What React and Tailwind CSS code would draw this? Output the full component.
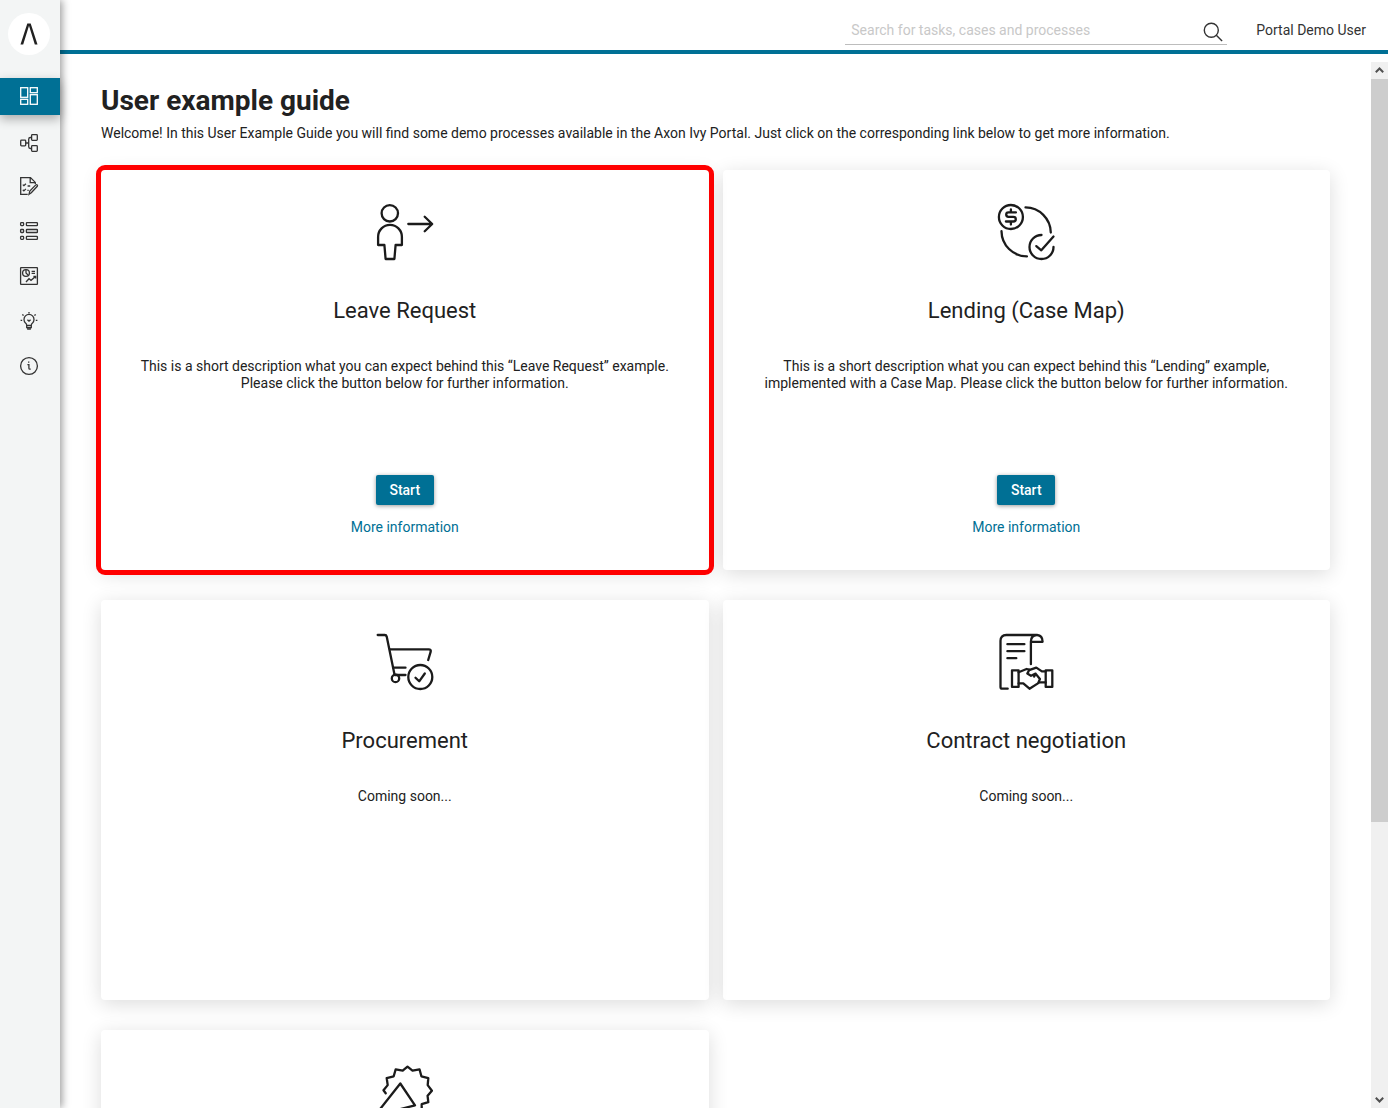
import React, { useState } from "react";

const DashboardIcon = () => (
  <>
    <rect x="3.7" y="3.7" width="7" height="9.6" />
    <rect x="3.7" y="15.3" width="7" height="5" />
    <rect x="13.3" y="3.7" width="7" height="5" />
    <rect x="13.3" y="10.7" width="7" height="9.6" />
  </>
);

const ProcessIcon = () => (
  <>
    <rect x="3.7" y="11.2" width="5" height="5.6" rx="0.8" />
    <rect x="14.6" y="5.7" width="5.7" height="5.6" rx="0.8" />
    <rect x="14.6" y="16.7" width="5.7" height="5.6" rx="0.8" />
    <path d="M8.7 14h3M14.6 8.5h-1.2q-1.7 0-1.7 1.7v7.6q0 1.7 1.7 1.7h1.2" />
  </>
);

const TaskIcon = () => (
  <>
    <path d="M18.3 10V8.4L13.5 3.6H3.7v16.7h7M13.2 3.6v5h5" />
    <path d="M5.8 10.6l1.1 1.1 2-2M5.8 15.8l1.1 1.1 2-2M10.6 12h2.6M10.4 16.4h1.3" />
    <path d="M12 20.3l.8-3.3 6-6.1q.8-.6 1.4 0t.1 1.4l-6 6.5z" />
  </>
);

const CaseIcon = () => (
  <>
    <rect x="3.6" y="3.6" width="3" height="3" rx="0.8" />
    <rect x="9.4" y="3.6" width="11" height="3" rx="0.6" />
    <rect x="3.6" y="10.5" width="3" height="3" rx="0.8" />
    <rect x="9.4" y="10.5" width="11" height="3" rx="0.6" />
    <rect x="3.6" y="17.4" width="3" height="3" rx="0.8" />
    <rect x="9.4" y="17.4" width="11" height="3" rx="0.6" />
  </>
);

const StatisticsIcon = () => (
  <>
    <rect x="3.6" y="3.6" width="16.8" height="16.8" rx="0.5" />
    <circle cx="9" cy="9" r="3.4" />
    <path d="M9 5.6V9l2.4 2.4M14.6 7.4h3.4M14.6 9.4h3.4" />
    <path d="M9 18l3-3.3 2 1.6 4.6-3.8M16.4 12.5h2.3v2" />
  </>
);

const ExamplesIcon = () => (
  <>
    <path d="M9.7 16.3q0-1.3-1.2-2.3a5 5 0 1 1 7 0q-1.2 1-1.2 2.3z" />
    <path d="M9.7 16.5v2h4.6v-2M10.8 18.6v1.6h2.4v-1.6M10.4 10.8l1.6 1.3 1.6-1.3" />
    <path d="M12 3v1.5M5.3 5.4l1.3 1.2M18.7 5.4l-1.3 1.2M3.6 11.4h1.6M18.8 11.4h1.6" />
  </>
);

const InfoIcon = () => (
  <>
    <circle cx="12" cy="12" r="8.4" />
    <path d="M10.4 10.6h1.5v3.6q0 1 1 1h.8" />
    <path d="M11.7 7.6v1.2" />
  </>
);

const menuItems = [
  { label: "Dashboard", icon: DashboardIcon },
  { label: "Processes", icon: ProcessIcon },
  { label: "Tasks", icon: TaskIcon },
  { label: "Cases", icon: CaseIcon },
  { label: "Statistics", icon: StatisticsIcon },
  { label: "User example guide", icon: ExamplesIcon },
  { label: "About", icon: InfoIcon },
];

const LeaveRequestIcon = () => (
  <>
    <circle cx="14.8" cy="11.3" r="8.2" />
    <path d="M9.4 43H3.1v-8.2a11.8 11.8 0 0 1 23.8 0V43h-6.3l-1.2 14h-8.8z" />
    <path d="M33.3 22H57M49.7 14.7l7.5 7.3-7.5 7.3" />
  </>
);

const LendingIcon = () => (
  <g transform="translate(0.7 0)">
    <circle cx="14.2" cy="15" r="12" />
    <path d="M19.2 10.4h-7.4q-2.3 0-2.3 2.2t2.3 2.3h4.8q2.5 0 2.5 2.3t-2.5 2.3H9.2M14.2 7.4v3M14.2 19.5v3" />
    <path d="M28.8 5.4a25.5 25.5 0 0 1 25.3 25.2M4.8 29.2a25.5 25.5 0 0 0 25.4 25.2" />
    <path d="M44.8 33a12 12 0 1 0 12 12" />
    <path d="M39.6 44.1l5 4.2 12.2-13.8" />
  </g>
);

const ProcurementIcon = () => (
  <>
    <path d="M2.7 3h7q1.6 0 2 1.6l7.8 37.8" />
    <path d="M15 17.3h38.7q2.6 0 2 2.4L53.2 28M18.7 35.7h11.8M19.8 43h10.7" />
    <circle cx="20.5" cy="46.4" r="3.7" />
    <circle cx="45.3" cy="45" r="12" />
    <path d="M40.5 45.7l3.7 3.6 5.6-7.8" />
  </>
);

const ContractIcon = () => (
  <g transform="translate(0.7 0)">
    <path d="M11 56.7H5.6q-1.8 0-1.8-1.8V8.8Q3.8 3 9.6 3h30.8q5.4.4 5.5 6.8H34.4M40 3q-5.8.6-5.8 6.6v22.6" />
    <path d="M10.7 12.2h17M10.7 19.2h17M10.7 26.2h8.9" />
    <rect x="15.3" y="38.3" width="6.6" height="16.6" />
    <rect x="49" y="38.3" width="6.6" height="16.6" />
    <path d="M21.9 40.3l8-3.3 2.8.6M21.9 51.4h4.7l6.2 5.3 10-6.3H49" />
    <path d="M49 39.4h-3.8l-5.6-3.8-7.2 2.6-1.8 3.4 3.7 2.2 4.6-2.2 4.3 5.4-1.4 3.4M38.9 41.6l-1.4 3" />
  </g>
);

const CertificateIcon = () => (
  <path d="M10.7 31.3l-2.2-3 4.2-5.2-1-7 7-1.8 2-7 7 1.4 4.8-4 5 4 7-1.4 1.9 7 6.9 1.8-.6 7 4.2 5.6-4.3 5.1.7 6.4-6.6 2v4M3 49.7l22.3-28.2L40 43.3 8 51.6" />
);

const examples = [
  {
    id: "leave-request",
    title: "Leave Request",
    description:
      "This is a short description what you can expect behind this “Leave Request” example. Please click the button below for further information.",
    icon: LeaveRequestIcon,
    available: true,
    highlighted: true,
  },
  {
    id: "lending",
    title: "Lending (Case Map)",
    description:
      "This is a short description what you can expect behind this “Lending” example, implemented with a Case Map. Please click the button below for further information.",
    icon: LendingIcon,
    available: true,
  },
  {
    id: "procurement",
    title: "Procurement",
    description: "Coming soon...",
    icon: ProcurementIcon,
  },
  {
    id: "contract",
    title: "Contract negotiation",
    description: "Coming soon...",
    icon: ContractIcon,
  },
  { id: "certificate", icon: CertificateIcon },
];

const Sidebar = ({ active, onSelect }) => (
  <aside className="relative z-10 flex w-[60px] flex-none flex-col bg-[#f3f5f5] shadow-[2px_0_8px_rgba(0,0,0,0.4)]">
    <a
      href="#home"
      aria-label="Home"
      className="mt-[13px] ml-2 flex h-[42px] w-[42px] items-center justify-center rounded-full bg-white"
    >
      <svg viewBox="0 0 18 22" className="h-[22px] w-[18px]">
        <path d="M0.5 21.5L7.3 0.5h3.4L17.5 21.5h-2.7L9 2.8 3.2 21.5z" fill="#212121" />
      </svg>
    </a>
    <nav className="mt-[23px] flex flex-col gap-2">
      {menuItems.map(({ label, icon: Icon }) => (
        <a
          key={label}
          href="#menu"
          aria-label={label}
          onClick={() => onSelect(label)}
          className={
            label === active
              ? "flex h-[37px] justify-center bg-[#007095] pt-1.5 pr-0.5 text-white shadow-[0_4px_10px_rgba(0,0,0,0.3)]"
              : "flex h-[37px] justify-center pt-1.5 pr-0.5 text-[#333333]"
          }
        >
          <svg
            viewBox="0 0 24 24"
            className="h-6 w-6"
            fill="none"
            stroke="currentColor"
            strokeWidth="1.3"
          >
            <Icon />
          </svg>
        </a>
      ))}
    </nav>
  </aside>
);

const Topbar = () => (
  <header className="flex h-[54px] flex-none items-start justify-end border-b-4 border-[#007095] pt-[15px] pr-[22px]">
    <label className="mr-[29px] flex h-[30px] w-[382px] border-b border-[#bdbdbd] pr-1">
      <input
        type="text"
        aria-label="Search"
        placeholder="Search for tasks, cases and processes"
        className="min-w-0 flex-1 px-1.5 pt-0.5 outline-none placeholder:text-[#c8c8c8]"
      />
      <svg
        viewBox="0 0 20 20"
        className="mt-[7px] h-5 w-5"
        fill="none"
        stroke="#333333"
        strokeWidth="1.4"
      >
        <circle cx="8.3" cy="8.3" r="7" />
        <path d="M13.3 13.3l5.8 5.8" />
      </svg>
    </label>
    <button className="h-[30px] text-[#333333]">Portal Demo User</button>
  </header>
);

const ExampleCard = ({ example }) => {
  const Icon = example.icon;

  return (
    <article
      className={
        example.highlighted
          ? "flex min-h-[400px] flex-col items-center rounded-sm px-9 pt-8 pb-[34px] text-center shadow-[0_4px_20px_rgba(0,0,0,0.14)] outline-[5px] outline-[#ff0000]"
          : "flex min-h-[400px] flex-col items-center rounded-sm px-9 pt-8 pb-[34px] text-center shadow-[0_4px_20px_rgba(0,0,0,0.14)]"
      }
    >
      <svg
        viewBox="0 0 60 60"
        className="h-[60px] w-[60px]"
        fill="none"
        stroke="#1b1b1b"
        strokeWidth="2.3"
        strokeLinecap="round"
        strokeLinejoin="round"
      >
        <Icon />
      </svg>
      {example.title && (
        <h2 className="mt-[35px] text-[22px] leading-7">{example.title}</h2>
      )}
      {example.description && (
        <p className="mt-[33px]">{example.description}</p>
      )}
      {example.available && (
        <div className="mt-auto flex flex-col items-center">
          <button className="h-[30px] w-[58px] rounded-xs bg-[#007095] font-medium text-white shadow-[0_1px_4px_rgba(0,0,0,0.4)]">
            Start
          </button>
          <a href="#more" className="mt-3.5 text-[#007095]">
            More information
          </a>
        </div>
      )}
    </article>
  );
};

const Scrollbar = () => (
  <div className="flex w-[17px] flex-none flex-col items-center bg-[#f0f0f0]">
    <svg viewBox="0 0 17 17" className="h-[17px] w-[17px] flex-none" fill="none" stroke="#505050" strokeWidth="2">
      <path d="M4.8 10.2l3.7-3.7 3.7 3.7" />
    </svg>
    <div className="h-[71%] w-full bg-[#cdcdcd]" />
    <svg viewBox="0 0 17 17" className="mt-auto h-[17px] w-[17px] flex-none" fill="none" stroke="#505050" strokeWidth="2">
      <path d="M4.8 6.8l3.7 3.7 3.7-3.7" />
    </svg>
  </div>
);

const App = () => {
  const [active, setActive] = useState("Dashboard");

  return (
    <div className="flex h-screen overflow-hidden bg-white font-['Roboto',sans-serif] text-[14px] leading-[17px] text-[#212121]">
      <Sidebar active={active} onSelect={setActive} />
      <div className="flex min-w-0 flex-1 flex-col">
        <Topbar />
        <div className="mt-2 flex min-h-0 flex-1">
          <main className="min-w-0 flex-1 overflow-hidden px-[41px] pt-[23px]">
            <h1 className="text-[28px] leading-8 font-bold">
              User example guide
            </h1>
            <p className="mt-2">
              Welcome! In this User Example Guide you will find some demo
              processes available in the Axon Ivy Portal. Just click on the
              corresponding link below to get more information.
            </p>
            <section className="mt-7 grid grid-cols-2 gap-x-3.5 gap-y-[30px]">
              {examples.map((example) => (
                <ExampleCard key={example.id} example={example} />
              ))}
            </section>
          </main>
          <Scrollbar />
        </div>
      </div>
    </div>
  );
};

export default App;
